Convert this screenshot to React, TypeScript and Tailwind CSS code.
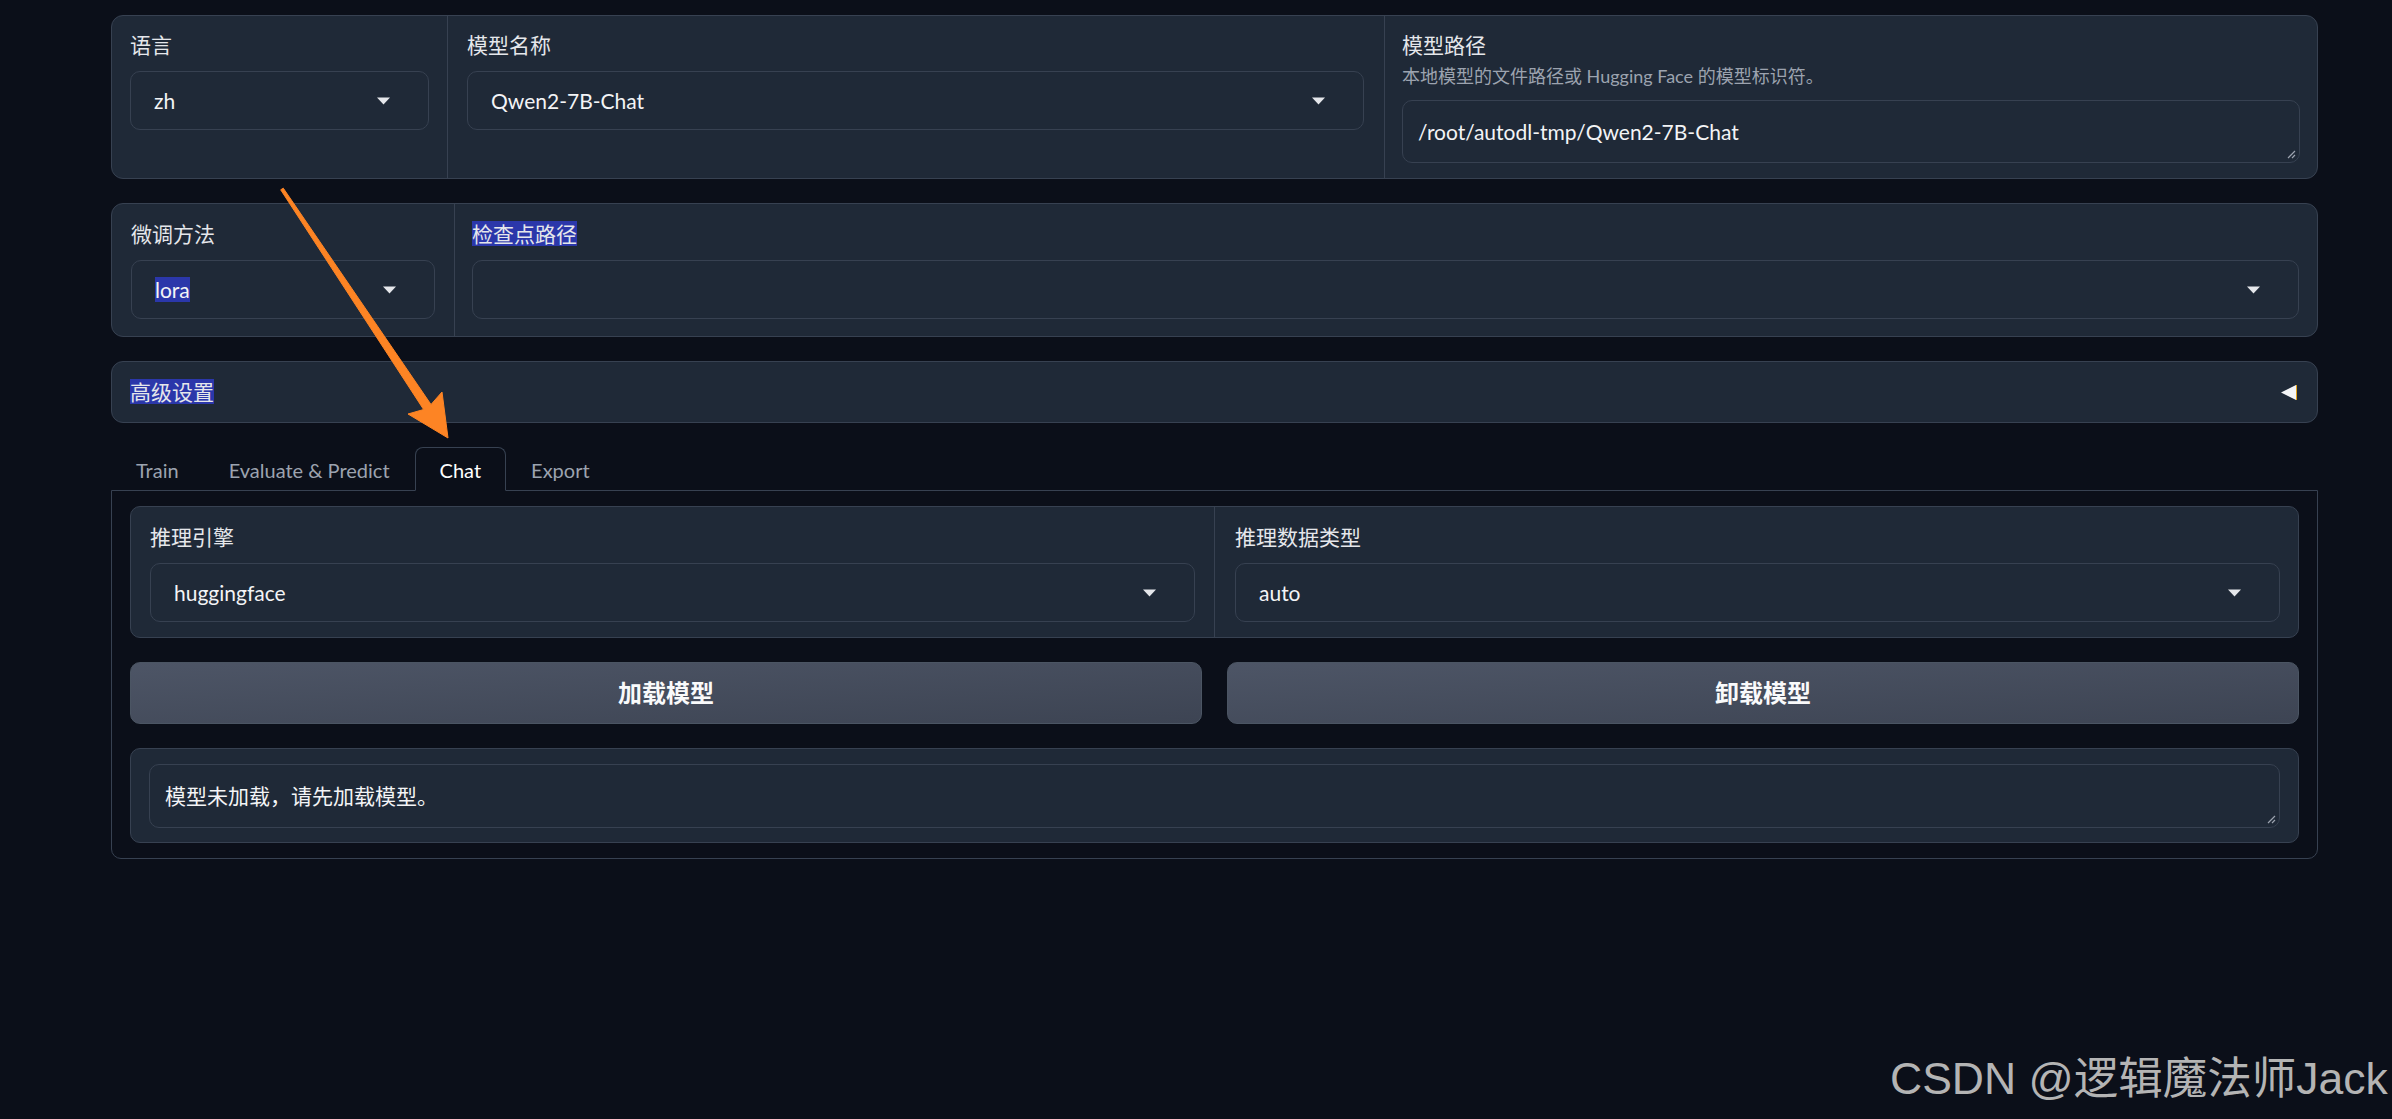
import React from 'react';

const TABS = ['Train', 'Evaluate & Predict', 'Chat', 'Export'];

function Caret() {
  return (
    <svg width="13" height="8" viewBox="0 0 13 8" className="shrink-0">
      <path d="M0 0.5h13L6.5 7.5z" fill="#e5e7eb" />
    </svg>
  );
}

function ResizeGrip() {
  return (
    <svg width="9" height="9" viewBox="0 0 9 9" className="absolute right-[3px] bottom-[3px]">
      <path d="M8 1L1 8M8 5L5 8" stroke="#9ca3af" strokeWidth="1.2" />
    </svg>
  );
}

function Select({ value, marked }: { value?: string; marked?: boolean }) {
  return (
    <div className="flex h-[59px] items-center rounded-[10px] border border-[#374151] bg-[#1f2937] pl-[23px] pr-[38px]">
      <span className="flex-1 text-[21px] text-[#f3f4f6]">
        {marked ? <span className="bg-[#2b37aa]">{value}</span> : value}
      </span>
      <Caret />
    </div>
  );
}

function Label({ children, marked }: { children: React.ReactNode; marked?: boolean }) {
  return (
    <div className="h-[28px] text-[21px] leading-[28px] text-[#e5e7eb]">
      {marked ? <span className="bg-[#2b37aa]">{children}</span> : children}
    </div>
  );
}

function Arrow() {
  return (
    <svg
      width="2392"
      height="1119"
      viewBox="0 0 2392 1119"
      className="pointer-events-none absolute left-0 top-0"
    >
      <polygon
        points="280.7,189.8 423.6,409.5 408,414 448,438 442,392 431,404.5 283.3,188.2"
        fill="#fd8424"
        stroke="#fd8424"
        strokeWidth="1"
        strokeLinejoin="round"
      />
    </svg>
  );
}

export default function App() {
  return (
    <div className="relative h-[1119px] w-full overflow-hidden bg-[#0b0f19] font-[family-name:Lato,Noto_Sans_CJK_SC,sans-serif]">
      <div className="ml-[111px] w-[2207px] pt-[15px]">
        {/* model row */}
        <div className="flex rounded-[12px] border border-[#374151] bg-[#1f2937]">
          <div className="w-[335px] px-[18px] py-[15px]">
            <Label>语言</Label>
            <div className="mt-[12px]">
              <Select value="zh" />
            </div>
          </div>
          <div className="w-[937px] border-l border-[#374151] pl-[19px] pr-[20px] py-[15px]">
            <Label>模型名称</Label>
            <div className="mt-[12px]">
              <Select value="Qwen2-7B-Chat" />
            </div>
          </div>
          <div className="flex-1 border-l border-[#374151] px-[17px] py-[15px]">
            <Label>模型路径</Label>
            <div className="mt-[5px] text-[18px] leading-[24px] text-[#9ca3af]">
              本地模型的文件路径或 Hugging Face 的模型标识符。
            </div>
            <div className="relative mt-[12px] flex h-[63px] items-center rounded-[10px] border border-[#374151] bg-[#1f2937] px-[15px] text-[21px] text-[#f3f4f6]">
              /root/autodl-tmp/Qwen2-7B-Chat
              <ResizeGrip />
            </div>
          </div>
        </div>

        {/* adapter row */}
        <div className="mt-[24px] flex rounded-[12px] border border-[#374151] bg-[#1f2937]">
          <div className="w-[342px] px-[19px] pt-[16px] pb-[17px]">
            <Label>微调方法</Label>
            <div className="mt-[12px]">
              <Select value="lora" marked />
            </div>
          </div>
          <div className="flex-1 border-l border-[#374151] pl-[17px] pr-[18px] pt-[16px] pb-[17px]">
            <Label marked>检查点路径</Label>
            <div className="mt-[12px]">
              <Select />
            </div>
          </div>
        </div>

        {/* accordion */}
        <div className="mt-[24px] flex h-[62px] items-center justify-between rounded-[12px] border border-[#374151] bg-[#1f2937] pl-[18px] pr-[20px]">
          <Label marked>高级设置</Label>
          <div className="flex items-center">
            <svg width="15" height="15" viewBox="0 0 15 15">
              <path d="M15 0L0 7.5L15 15z" fill="#f3f4f6" />
            </svg>
            <span className="h-[15px] w-px bg-[#e3a21a]" />
          </div>
        </div>

        {/* tabs */}
        <div className="mt-[24px] flex">
          {TABS.map((t) =>
            t === 'Chat' ? (
              <div
                key={t}
                className="relative z-10 flex h-[44px] items-center rounded-t-[8px] border border-[#374151] border-b-[#0b0f19] bg-[#0b0f19] px-[24px] pt-[2px] text-[20px] text-white"
              >
                {t}
              </div>
            ) : (
              <div
                key={t}
                className="flex h-[44px] items-center border border-transparent px-[24px] pt-[2px] text-[20px] text-[#9ca3af]"
              >
                {t}
              </div>
            )
          )}
        </div>

        <div className="-mt-px flex flex-col gap-[24px] rounded-b-[10px] border border-[#374151] px-[18px] pt-[15px] pb-[15px]">
          <div className="flex rounded-[10px] border border-[#374151] bg-[#1f2937]">
            <div className="w-[1083px] px-[19px] pt-[16px] pb-[15px]">
              <Label>推理引擎</Label>
              <div className="mt-[12px]">
                <Select value="huggingface" />
              </div>
            </div>
            <div className="flex-1 border-l border-[#374151] pl-[20px] pr-[18px] pt-[16px] pb-[15px]">
              <Label>推理数据类型</Label>
              <div className="mt-[12px]">
                <Select value="auto" />
              </div>
            </div>
          </div>

          <div className="grid grid-cols-2 gap-[25px]">
            <button className="h-[62px] rounded-[10px] border border-[#4b5563] bg-linear-to-br from-[#4d5566] to-[#3d4453] text-[24px] font-bold text-[#f9fafb]">
              加载模型
            </button>
            <button className="h-[62px] rounded-[10px] border border-[#4b5563] bg-linear-to-br from-[#4d5566] to-[#3d4453] text-[24px] font-bold text-[#f9fafb]">
              卸载模型
            </button>
          </div>

          <div className="rounded-[10px] border border-[#374151] bg-[#1f2937] px-[18px] pt-[15px] pb-[14px]">
            <div className="relative flex h-[64px] items-center rounded-[10px] border border-[#374151] bg-[#1f2937] px-[15px] text-[21px] text-[#f3f4f6]">
              模型未加载，请先加载模型。
              <ResizeGrip />
            </div>
          </div>
        </div>
      </div>

      <Arrow />

      <div className="absolute left-[1890px] top-[1053px] whitespace-nowrap font-[family-name:Liberation_Sans,Noto_Sans_CJK_SC,sans-serif] text-[44.5px] leading-[52px] text-[#b4b4b4]">
        CSDN @逻辑魔法师Jack
      </div>
    </div>
  );
}
